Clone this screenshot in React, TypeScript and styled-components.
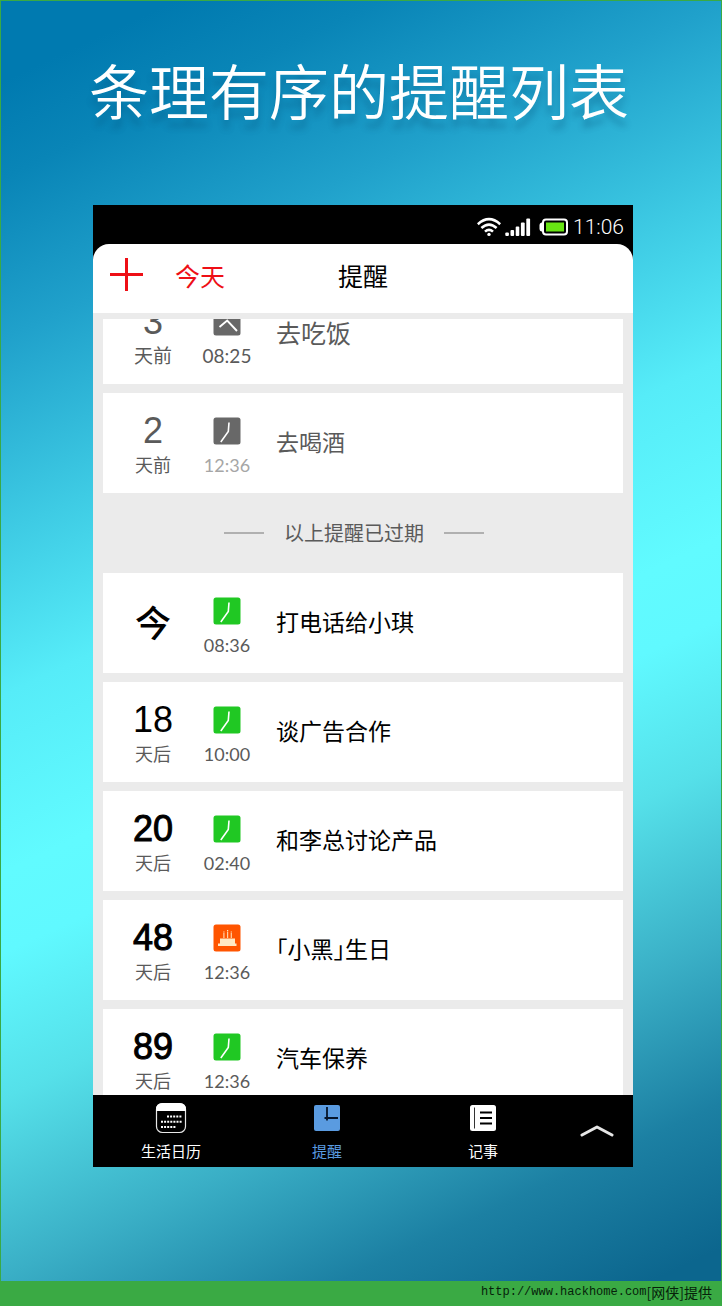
import React from "react";
import styled, { createGlobalStyle, css } from "styled-components";

const cjk = `"Noto Sans CJK SC", sans-serif`;

const GlobalStyle = createGlobalStyle`
  * { box-sizing: border-box; }
  body { margin: 0; font-family: ${cjk}; }
  h1, h2, h3, p, ul { margin: 0; padding: 0; font-weight: 400; }
  li { list-style: none; }
  a { color: inherit; text-decoration: none; }
  button { border: 0; padding: 0; background: none; font: inherit; color: inherit; cursor: pointer; }
  svg { display: block; }
`;

const Page = styled.div`
  min-height: 100vh;
  display: flex;
  flex-direction: column;
  background: #3aaa44;
`;

const Poster = styled.main`
  flex: 1;
  margin: 1px 1px 0;
  padding: 52px 88px 114px 92px;
  background: linear-gradient(155deg, #007ab0 5%, #0985b7 11%, #20a1cb 21%, #3ecbe4 33%, #56ecf8 43%, #61fbff 54%, #60f9ff 59%, #55e0e9 68%, #3aafc6 79%, #1c80a3 89%, #0c668e 98%);
`;

const Headline = styled.h1`
  margin: 0 -8px 80px -16px;
  font-size: 60px;
  line-height: 72px;
  font-weight: 350;
  text-align: center;
  white-space: nowrap;
  color: #fff;
  text-shadow: 0 9px 6px rgba(0, 70, 110, 0.3);
`;

const Phone = styled.section`
  background: #000;
`;

const StatusBar = styled.div`
  height: 39px;
  padding: 4px 9px 0 0;
  display: flex;
  align-items: center;
  justify-content: flex-end;
  gap: 4px;
  color: #fff;
`;

const StatusTime = styled.time`
  font: 300 21px/24px Roboto, sans-serif;
`;

const Header = styled.header`
  height: 69px;
  padding: 0 16px 8px;
  display: grid;
  grid-template-columns: 1fr auto 1fr;
  align-items: center;
  border-radius: 16px 16px 0 0;
  background: #fff;
`;

const HeaderActions = styled.div`
  display: flex;
  align-items: center;
  gap: 31px;
  color: #ee0f16;
`;

const HeaderButton = styled.button`
  font-size: 25px;
  line-height: 36px;
`;

const HeaderTitle = styled.h2`
  font-size: 25px;
  line-height: 36px;
  color: #000;
`;

const ListPanel = styled.div`
  padding: 6px 10px 0;
  background: #ebebeb;
`;

const ListViewport = styled.div`
  height: 776px;
  overflow: hidden;
`;

const List = styled.ul`
  margin-top: -35px;
  display: flex;
  flex-direction: column;
  gap: 9px;
`;

const Card = styled.li<{ $past?: boolean }>`
  height: 100px;
  flex: none;
  padding-top: 20px;
  display: grid;
  grid-template-columns: 100px 48px 1fr;
  align-items: start;
  background: #fff;
  color: ${(p) => (p.$past ? "#5a5a5a" : "#000")};
`;

const DayColumn = styled.div`
  display: flex;
  flex-direction: column;
  align-items: center;
  gap: 4px;
`;

const DayNumber = styled.span<{ $strong?: boolean }>`
  font: 36px/36px "Liberation Sans", sans-serif;
  ${(p) => p.$strong && css`-webkit-text-stroke: 1px currentColor;`}
`;

const Today = styled.strong`
  font-size: 36px;
  line-height: 56px;
  font-weight: 500;
`;

const DayLabel = styled.span<{ $large?: boolean }>`
  font-size: ${(p) => (p.$large ? 19 : 18)}px;
  line-height: 22px;
  color: #5a5a5a;
`;

const TimeColumn = styled.div`
  padding-top: 4px;
  display: flex;
  flex-direction: column;
  align-items: center;
  gap: 8px;
`;

const Time = styled.time<{ $faded?: boolean; $large?: boolean }>`
  font-family: Lato, sans-serif;
  font-size: ${(p) => (p.$large ? 19 : 18)}px;
  line-height: 24px;
  white-space: nowrap;
  color: ${(p) => (p.$faded ? "#a6a6a6" : "#5a5a5a")};
`;

const CardTitle = styled.h3<{ $large?: boolean }>`
  padding: 15px 0 0 25px;
  font-size: ${(p) => (p.$large ? 25 : 23)}px;
  line-height: 26px;
  font-feature-settings: "halt";
`;

const Divider = styled.li`
  height: 62px;
  padding-right: 18px;
  display: flex;
  align-items: center;
  justify-content: center;
  gap: 20px;
  font-size: 20px;
  line-height: 30px;
  color: #5a5a5a;

  &::before,
  &::after {
    content: "";
    width: 40px;
    height: 2px;
    background: #b0b0b0;
  }
`;

const TabBar = styled.nav`
  height: 72px;
  display: grid;
  grid-template-columns: 13fr 13fr 13fr 6fr;
  color: #fff;
`;

const Tab = styled.a<{ $active?: boolean }>`
  padding-top: 7px;
  display: flex;
  flex-direction: column;
  align-items: center;
  gap: 7px;
  font-size: 15px;
  line-height: 20px;
  color: ${(p) => (p.$active ? "#5a9be0" : "#fff")};
`;

const ExpandButton = styled.button`
  display: flex;
  align-items: center;
  justify-content: center;
`;

const Credit = styled.footer`
  height: 25px;
  padding: 0 10px 4px;
  display: flex;
  justify-content: flex-end;
  align-items: center;
  font-size: 14px;
  line-height: 20px;
  color: #06210a;
`;

const CreditLink = styled.a`
  font: 12px/20px "Liberation Mono", monospace;
`;

type IconKind = "meal" | "clock" | "cake";

function CardIcon({ kind, color }: { kind: IconKind; color: string }) {
  return (
    <svg width="28" height="28" viewBox="0 0 28 28" aria-hidden="true">
      <rect x="0.5" y="0.5" width="27" height="27" rx="2.5" fill={color} />
      {kind === "clock" && (
        <path d="M16 5.500 15.300 14.500 7.800 25" fill="none" stroke="#fff" strokeWidth="1.6" />
      )}
      {kind === "meal" && (
        <path d="M6.500 19 14.200 12.500 24 23" fill="none" stroke="#fff" strokeWidth="1.9" />
      )}
      {kind === "cake" && (
        <g fill="#ffe9c4">
          <path d="M7 14.500h15V21H7z" />
          <path d="M5 19.500h18.500V22H5z" />
          <path d="M10.300 9h1.200v5h-1.200zM14 7.500h1.200V14H14zM17.700 9h1.200v5h-1.200z" opacity=".85" />
          <path d="M10.300 7.600h1.200v1h-1.200zM14 6h1.200v1H14zM17.700 7.600h1.200v1h-1.200z" />
        </g>
      )}
    </svg>
  );
}

interface Reminder {
  day: string;
  label?: string;
  time: string;
  title: string;
  icon: IconKind;
  past?: boolean;
  strong?: boolean;
  faded?: boolean;
  large?: boolean;
}

const expired: Reminder[] = [
  { day: "3", label: "天前", time: "08:25", title: "去吃饭", icon: "meal", past: true, large: true },
  { day: "2", label: "天前", time: "12:36", title: "去喝酒", icon: "clock", past: true, faded: true },
];

const upcoming: Reminder[] = [
  { day: "今", time: "08:36", title: "打电话给小琪", icon: "clock" },
  { day: "18", label: "天后", time: "10:00", title: "谈广告合作", icon: "clock" },
  { day: "20", label: "天后", time: "02:40", title: "和李总讨论产品", icon: "clock", strong: true },
  { day: "48", label: "天后", time: "12:36", title: "「小黑」生日", icon: "cake", strong: true },
  { day: "89", label: "天后", time: "12:36", title: "汽车保养", icon: "clock", strong: true },
];

function ReminderCard({ item }: { item: Reminder }) {
  const color = item.past ? "#686868" : item.icon === "cake" ? "#ff5500" : "#20c823";
  return (
    <Card $past={item.past}>
      <DayColumn>
        {item.label ? (
          <>
            <DayNumber $strong={item.strong}>{item.day}</DayNumber>
            <DayLabel $large={item.large}>{item.label}</DayLabel>
          </>
        ) : (
          <Today>{item.day}</Today>
        )}
      </DayColumn>
      <TimeColumn>
        <CardIcon kind={item.icon} color={color} />
        <Time $faded={item.faded} $large={item.large}>{item.time}</Time>
      </TimeColumn>
      <CardTitle $large={item.large}>{item.title}</CardTitle>
    </Card>
  );
}

const WifiIcon = () => (
  <svg width="24" height="20" viewBox="0 0 24 20" fill="none" stroke="#fff" strokeWidth="2.6" aria-hidden="true">
    <path d="M.8 7.2Q12-2.8 23.2 7.2M4.4 11Q12 4.2 19.6 11M8 14.6Q12 11 16 14.6" />
    <circle cx="12" cy="17.4" r="1.7" fill="#fff" stroke="none" />
  </svg>
);

const SignalIcon = () => (
  <svg width="26" height="20" viewBox="0 0 26 20" fill="#fff" aria-hidden="true">
    <rect x="0.3" y="15.5" width="3.6" height="3.5" rx="1" />
    <rect x="5.5" y="13" width="3.6" height="6" rx="1" />
    <rect x="10.7" y="9.5" width="3.6" height="9.5" rx="1" />
    <rect x="15.9" y="5.5" width="3.8" height="13.5" rx="1" />
    <rect x="21.3" y="1.5" width="3.8" height="17.5" rx="1" />
  </svg>
);

const BatteryIcon = () => (
  <svg width="34" height="20" viewBox="0 0 34 20" aria-hidden="true">
    <path d="M8 5.500H6.500Q4.500 6 4.500 8v4q0 2 2 2.500H8z" fill="#fff" />
    <rect x="8" y="2.500" width="24" height="15" rx="3" fill="#000" stroke="#fff" strokeWidth="2" />
    <rect x="11" y="5.500" width="18" height="9" fill="#68e413" />
  </svg>
);

const PlusIcon = () => (
  <svg width="35" height="35" viewBox="0 0 35 35" stroke="currentColor" strokeWidth="3" aria-hidden="true">
    <path d="M17.500 1v33M1 17.500h33" />
  </svg>
);

const CalendarIcon = () => (
  <svg width="32" height="32" viewBox="0 0 32 32" fill="none" aria-hidden="true">
    <rect x="1.500" y="1.500" width="29" height="29" rx="6" stroke="#e8e8e8" strokeWidth="1.2" />
    <path d="M1 9V7.500Q1 1 7.500 1h17Q31 1 31 7.500V9z" fill="#fff" />
    <path d="M12 14.500h15M6 19.800h21M6 25h15" stroke="#fff" strokeWidth="2" strokeDasharray="2 1.100" />
  </svg>
);

const ClockIcon = () => (
  <svg width="32" height="32" viewBox="0 0 32 32" aria-hidden="true">
    <rect x="3" y="3" width="26" height="26" rx="2" fill="#5a9be0" />
    <path d="M16 5v13.500M13.500 16H27" stroke="#06152b" strokeWidth="1.800" fill="none" />
  </svg>
);

const NotesIcon = () => (
  <svg width="32" height="32" viewBox="0 0 32 32" aria-hidden="true">
    <rect x="3" y="3" width="26" height="26" rx="2.500" fill="#fff" />
    <path d="M7.500 5.500v21" stroke="#333" strokeWidth="1" />
    <path d="M13 10.500h12M13 16h12M13 21.500h12" stroke="#000" strokeWidth="1.800" />
  </svg>
);

const ChevronIcon = () => (
  <svg width="34" height="14" viewBox="0 0 34 14" aria-hidden="true">
    <path d="M2 11 17 3l15 8" fill="none" stroke="#e6e6e6" strokeWidth="3" strokeLinecap="round" strokeLinejoin="round" />
  </svg>
);

export default function App() {
  return (
    <Page>
      <GlobalStyle />
      <Poster>
        <Headline>条理有序的提醒列表</Headline>
        <Phone>
          <StatusBar>
            <WifiIcon />
            <SignalIcon />
            <BatteryIcon />
            <StatusTime>11:06</StatusTime>
          </StatusBar>
          <Header>
            <HeaderActions>
              <HeaderButton type="button" aria-label="添加">
                <PlusIcon />
              </HeaderButton>
              <HeaderButton type="button">今天</HeaderButton>
            </HeaderActions>
            <HeaderTitle>提醒</HeaderTitle>
          </Header>
          <ListPanel>
            <ListViewport>
              <List>
                {expired.map((item) => (
                  <ReminderCard key={item.day} item={item} />
                ))}
                <Divider>以上提醒已过期</Divider>
                {upcoming.map((item) => (
                  <ReminderCard key={item.day} item={item} />
                ))}
              </List>
            </ListViewport>
          </ListPanel>
          <TabBar>
            <Tab href="#calendar">
              <CalendarIcon />
              生活日历
            </Tab>
            <Tab href="#reminders" $active aria-current="page">
              <ClockIcon />
              提醒
            </Tab>
            <Tab href="#notes">
              <NotesIcon />
              记事
            </Tab>
            <ExpandButton type="button" aria-label="展开">
              <ChevronIcon />
            </ExpandButton>
          </TabBar>
        </Phone>
      </Poster>
      <Credit>
        <CreditLink href="#source">http://www.hackhome.com</CreditLink>[网侠]提供
      </Credit>
    </Page>
  );
}
